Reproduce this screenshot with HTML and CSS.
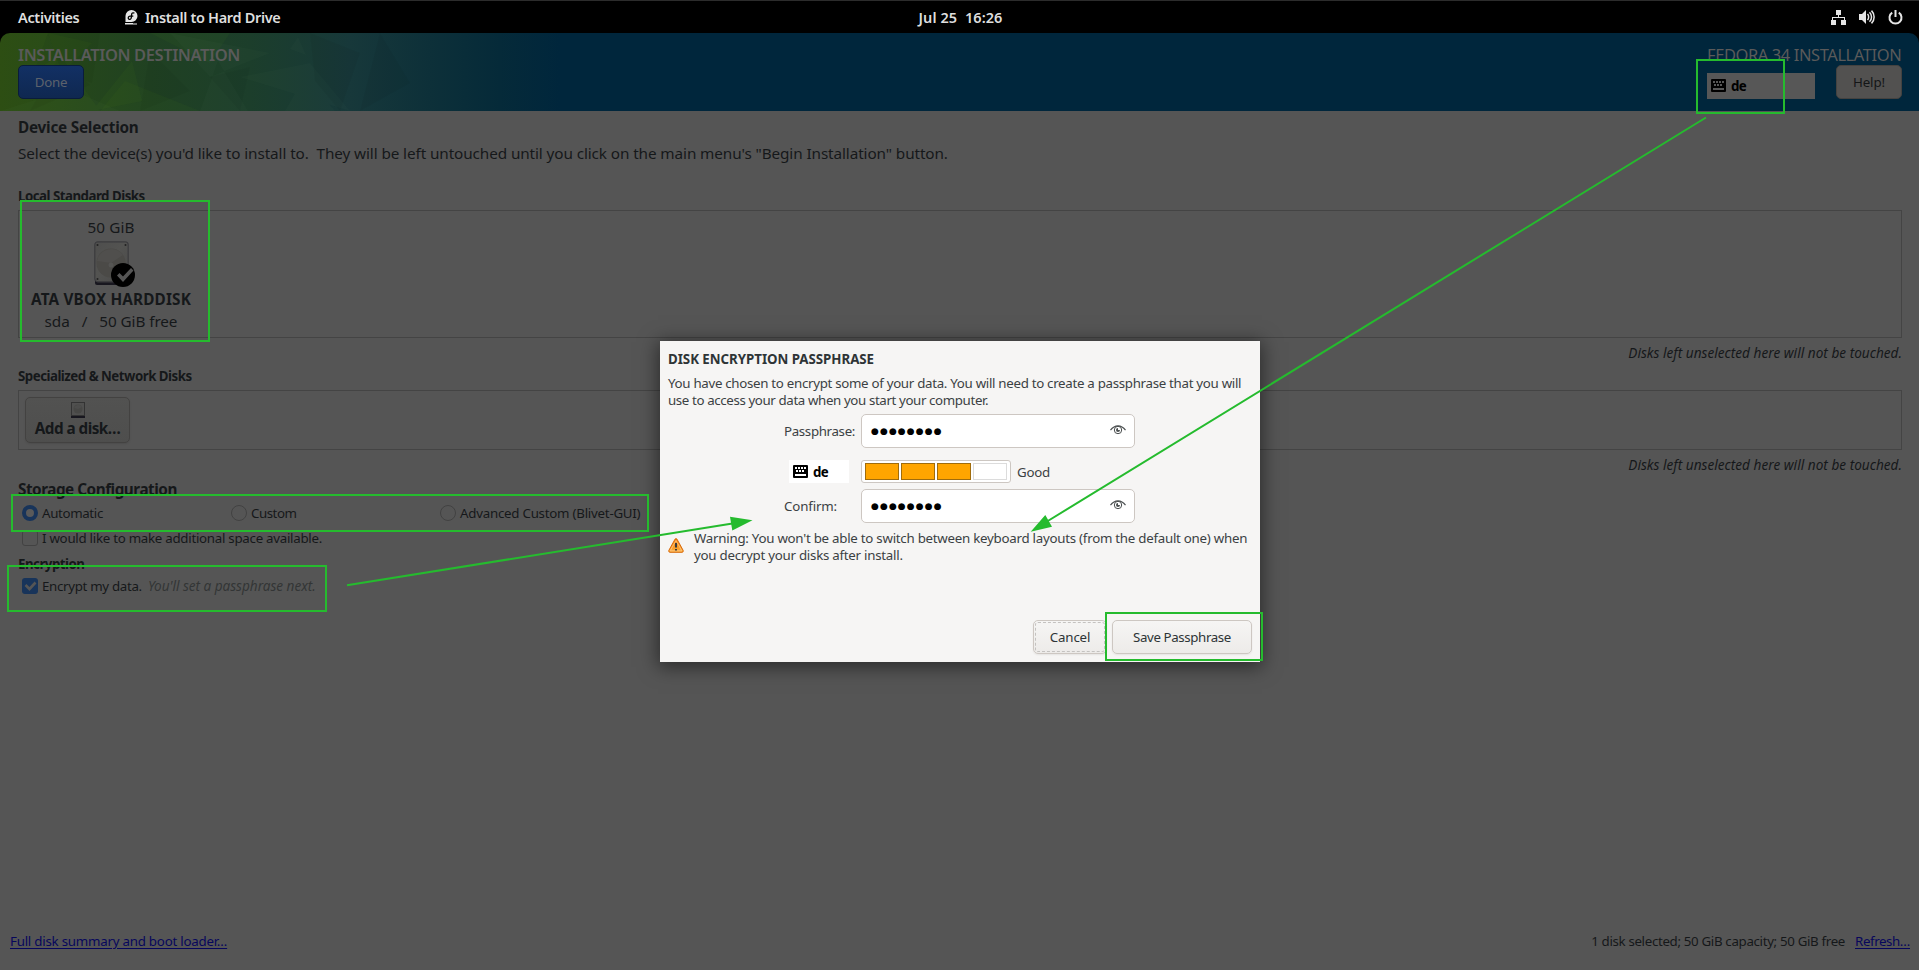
FILE: index.html
```
<!DOCTYPE html>
<html lang="en">
<head>
<meta charset="utf-8">
<title>Install to Hard Drive</title>
<link rel="stylesheet" href="styles.css">
</head>
<body>
<svg class="defs" width="0" height="0">
  <defs>
    <symbol id="keyboard" viewBox="0 0 15 13">
      <path fill-rule="evenodd" d="M1 0H14a1 1 0 0 1 1 1V12a1 1 0 0 1-1 1H1a1 1 0 0 1-1-1V1a1 1 0 0 1 1-1zM2 2v2h2V2zM5 2v2h2V2zM8 2v2h2V2zM11 2v2h2V2zM3 5v2h2V5zM6 5v2h2V5zM9 5v2h2V5zM2 9v2h11V9z"/>
    </symbol>
    <symbol id="eye" viewBox="0 0 16 10">
      <path d="M.5 5.200C3 1.800 5.500.8 8 .8s5 1 7.500 4.400" fill="none" stroke="#4b4f50" stroke-width="1.200"/>
      <circle cx="8" cy="5" r="3.700" fill="none" stroke="#4b4f50" stroke-width="1"/>
      <path d="M8 3a2 2 0 1 0 2 2H8z" fill="#4b4f50"/>
    </symbol>
    <linearGradient id="plate" x1="0" y1="0" x2="1" y2="1">
      <stop offset="0" stop-color="#4e4e4d"/><stop offset=".45" stop-color="#535351"/><stop offset="1" stop-color="#4a4a49"/>
    </linearGradient>
    <linearGradient id="warn" x1="0" y1="0" x2="0" y2="1">
      <stop offset="0" stop-color="#f57900"/><stop offset="1" stop-color="#fcaf3e"/>
    </linearGradient>
  </defs>
</svg>
<div class="desktop">
  <nav class="topbar">
    <div class="topbar-left">
      <span class="activities">Activities</span>
      <svg class="fedora" viewBox="0 0 13 15" width="13" height="15">
        <path d="M6.500 0A6 6 0 0 1 12.500 6A6 6 0 0 1 6.500 12H.500V6A6 6 0 0 1 6.500 0z" fill="#e6e6e6"/>
        <path d="M9.400 3.100C7.600 2.300 6.700 3.300 6.600 4.600L6.300 7.600C6.100 9.400 4.800 9.700 3.800 9.100C2.700 8.200 3.300 6.200 5 6.200H8.300" fill="none" stroke="#000" stroke-width="1.300"/>
        <path d="M0 13h12v1.500H0z" fill="#e6e6e6"/><path d="M8 13h4v1.500H8z" fill="#777"/>
      </svg>
      <span class="app-name">Install to Hard Drive</span>
    </div>
    <span class="clock">Jul 25&nbsp; 16:26</span>
    <div class="tray">
      <svg width="15" height="15" viewBox="0 0 15 15" fill="#e6e6e6"><path d="M5 0h5v5H5zM0 10h5v5H0zM10 10h5v5h-5zM7 5h1v2h6v3h-1V8H2v2H1V7h6z"/></svg>
      <svg width="16" height="14" viewBox="0 0 16 14"><path d="M0 4h3l4-4v14L3 10H0z" fill="#e6e6e6"/><path d="M8.500 4c1.500 1.500 1.500 4.500 0 6M10.500 2.200c2.700 2.500 2.700 7.100 0 9.600M12.500.6c3.500 3.500 3.500 9.300 0 12.800" fill="none" stroke="#e6e6e6" stroke-width="1.500"/></svg>
      <svg width="15" height="15" viewBox="0 0 15 15" fill="none" stroke="#e6e6e6" stroke-width="2"><path d="M4.200 2.600A6 6 0 1 0 10.800 2.600M7.500 0v7"/></svg>
    </div>
  </nav>

  <header class="banner">
    <svg class="facets" width="560" height="78" viewBox="0 0 560 78">
      <g fill="#6fae1c" fill-opacity=".045">
        <path d="M0 0H48L20 78H0zM48 0l14 40 30-30zM92 78l40-50 10 40zM0 60l60-38 40 56H0z"/>
        <path d="M100 78l25-30 75 30zM150 0l60 30 20-30z"/>
      </g>
      <g fill="#9fd0a0" fill-opacity=".025">
        <path d="M170 0l40 44 60-24zM200 78l18-50 30 50zM290 16l8-12 8 18zM285 78l20-35 30 35zM240 44l70-14 40 48zM0 78l70-22 50 22z"/>
      </g>
      <g fill="#000" fill-opacity=".04">
        <path d="M48 0h52l-8 50-30-10zM140 78l10-60 40 40zM210 44l40-10-10 44zM310 0l50 20-20 58-25-30zM380 0l30 50-50 28zM30 78l30-56 30 30z"/>
      </g>
    </svg>
    <div class="banner-col">
      <h1 class="banner-title">INSTALLATION DESTINATION</h1>
      <button class="btn btn-done">Done</button>
    </div>
    <div class="banner-col banner-right">
      <span class="product">FEDORA 34 INSTALLATION</span>
      <div class="banner-tools">
        <div class="layout layout-dim"><svg width="15" height="13"><use href="#keyboard"/></svg><b>de</b></div>
        <button class="btn btn-help">Help!</button>
      </div>
    </div>
  </header>

  <main class="content">
    <h2 class="h-large">Device Selection</h2>
    <p class="intro">Select the device(s) you'd like to install to.&nbsp; They will be left untouched until you click on the main menu's "Begin Installation" button.</p>

    <h3 class="h-small h-local">Local Standard Disks</h3>
    <section class="disk-box">
      <div class="disk">
        <span class="disk-size">50 GiB</span>
        <svg class="disk-icon" width="42" height="46" viewBox="0 0 42 46">
          <rect x="1" y="38" width="34" height="6" rx="2" fill="#18171f"/>
          <rect x=".8" y=".8" width="33.400" height="40" rx="3" fill="url(#plate)" stroke="#3b3b3e" stroke-width="1.200"/>
          <circle cx="17" cy="22" r="14.500" fill="#4b4a47"/>
          <path d="M3 20A14.500 14.500 0 0 1 29 14L17 22z" fill="#504f4d"/>
          <circle cx="17" cy="24" r="2.500" fill="#555553"/>
          <g fill="#222"><circle cx="3.500" cy="4" r="1"/><circle cx="31.500" cy="4" r="1"/><circle cx="3.500" cy="38" r="1"/></g>
          <circle cx="29" cy="34" r="12" fill="#000"/>
          <path d="M23 34.500l2.500-2.500 3.500 3.500 8-8.500 2.500 2.500L29 41z" fill="#555"/>
        </svg>
        <b class="disk-name">ATA VBOX HARDDISK</b>
        <div class="disk-meta"><span>sda</span><span>/</span><span>50 GiB free</span></div>
      </div>
    </section>
    <p class="hint">Disks left unselected here will not be touched.</p>

    <h3 class="h-small h-special">Specialized &amp; Network Disks</h3>
    <section class="network-box">
      <button class="btn btn-add">
        <svg width="14" height="16" viewBox="0 0 14 16"><path d="M0 13h14v3H0z" fill="#18171f"/><rect x=".5" y=".5" width="13" height="13" fill="#50504f" stroke="#333"/><circle cx="7" cy="7" r="4.500" fill="#474745"/><path d="M3 6a4.500 4.500 0 0 1 8-1L7 7z" fill="#4d4d4c"/></svg>
        <span>Add a disk…</span>
      </button>
    </section>
    <p class="hint">Disks left unselected here will not be touched.</p>

    <h2 class="h-large h-storage">Storage Configuration</h2>
    <div class="radios">
      <label class="choice"><i class="radio radio-on"></i><span class="t-auto">Automatic</span></label>
      <label class="choice"><i class="radio"></i><span class="t-custom">Custom</span></label>
      <label class="choice"><i class="radio"></i><span class="t-adv">Advanced Custom (Blivet-GUI)</span></label>
    </div>
    <label class="choice choice-space"><i class="check"></i><span>I would like to make additional space available.</span></label>

    <h3 class="h-small h-enc">Encryption</h3>
    <label class="choice choice-enc">
      <svg class="check-on" width="16" height="16" viewBox="0 0 16 16"><rect width="16" height="16" rx="3" fill="#18345a"/><path d="M3.500 7l4 4 6-6.500" fill="none" stroke="#555" stroke-width="2.600"/></svg>
      <span class="t-enc">Encrypt my data.</span><em>You'll set a passphrase next.</em>
    </label>

    <footer class="footer">
      <a class="link t-summary">Full disk summary and boot loader…</a>
      <div class="status"><span>1 disk selected; 50 GiB capacity; 50 GiB free</span><a class="link t-refresh">Refresh…</a></div>
    </footer>
  </main>
</div>

<div class="dialog">
  <h2 class="dialog-title">DISK ENCRYPTION PASSPHRASE</h2>
  <p class="dialog-text">You have chosen to encrypt some of your data. You will need to create a passphrase that you will<br><span class="t-use">use to access your data when you start your computer.</span></p>
  <div class="form">
    <span class="t-pass">Passphrase:</span>
    <div class="field"><span class="dots">●●●●●●●●</span><svg width="16" height="10"><use href="#eye"/></svg></div>
    <div class="layout layout-lit"><svg width="15" height="13"><use href="#keyboard"/></svg><b>de</b></div>
    <div class="strength"><div class="meter"><i class="on"></i><i class="on"></i><i class="on"></i><i></i></div><span>Good</span></div>
    <span class="t-confirm">Confirm:</span>
    <div class="field"><span class="dots">●●●●●●●●</span><svg width="16" height="10"><use href="#eye"/></svg></div>
  </div>
  <div class="warning">
    <svg width="16" height="15" viewBox="0 0 16 15"><path d="M7 1.200Q8 0 9 1.200L15.200 12.500Q15.600 14.300 14 14.300H2Q.4 14.300.8 12.500z" fill="url(#warn)" stroke="#d8690b"/><path d="M8 2.500L13.800 12.800H2.200z" fill="none" stroke="#fcc98a" stroke-width=".8"/><path d="M7 5h2v4.500H7zM7 11h2v1.500H7z" fill="#3a3a3a"/></svg>
    <p>Warning: You won't be able to switch between keyboard layouts (from the default one) when<br><span class="t-decrypt">you decrypt your disks after install.</span></p>
  </div>
  <div class="actions">
    <button class="btn btn-light btn-cancel">Cancel</button>
    <button class="btn btn-light btn-save">Save Passphrase</button>
  </div>
</div>

<svg class="marks" width="1919" height="970" viewBox="0 0 1919 970">
  <g fill="none" stroke="#25bb2e" stroke-width="2">
    <rect x="21" y="201" width="188" height="140"/>
    <rect x="12" y="495" width="636" height="36"/>
    <rect x="8" y="566" width="318" height="45"/>
    <rect x="1697" y="60" width="87" height="53"/>
    <rect x="1106" y="613" width="156" height="47"/>
    <path d="M347 585.200L734 523.300M1706 117.500L1047 521.500"/>
  </g>
  <path d="M752.500 520.300L730 516.700L732.300 530.500zM1030.700 531.700L1045.300 515L1052 526.700z" fill="#25bb2e"/>
</svg>
</body>
</html>
```
FILE: styles.css
```
* { box-sizing: border-box; }
body { margin: 0; background: #000; font: 13.3px/18px "Noto Sans", "Open Sans", sans-serif; letter-spacing: -.27px; color: #15181a; }
h1, h2, h3, p { margin: 0; font-size: inherit; }
button { font: inherit; letter-spacing: inherit; margin: 0; padding: 0; }
svg { display: block; flex: none; }
.defs { position: absolute; }
.desktop { height: 970px; overflow: hidden; display: flex; flex-direction: column; white-space: nowrap; }

/* Shell bar */
.topbar { flex: none; height: 33px; border-top: 1px solid #2c2c2c; padding: 0 16px 1px 18px; display: grid; grid-template-columns: 1fr auto 1fr; align-items: center; color: #dedede; font-size: 14.5px; font-weight: 600; letter-spacing: -.33px; }
.topbar-left { display: flex; align-items: center; }
.activities { width: 107px; }
.fedora { margin-right: 7px; }
.clock { letter-spacing: .08px; }
.tray { display: flex; justify-content: flex-end; align-items: center; gap: 13px; }
.topbar svg { margin-top: 1px; }

/* Banner */
.banner { flex: none; height: 78px; position: relative; border-radius: 10px 10px 0 0; overflow: hidden; padding: 11px 17px 0 18px; display: flex; justify-content: space-between; background: linear-gradient(90deg, #2a4a13 0, #264819 60px, #204122 150px, #1c3e2b 250px, #17383a 350px, #0d3039 430px, #052a39 500px, #00263c 560px); color: #5a5a5a; }
.facets { position: absolute; left: 0; top: 0; }
.banner-col { position: relative; display: flex; flex-direction: column; }
.banner-title, .product { font-size: 16.5px; line-height: 21px; letter-spacing: -.41px; }
.banner-title { font-weight: 600; }
.product { letter-spacing: -.42px; }
.btn { display: flex; align-items: center; justify-content: center; border-radius: 5px; }
.btn-done, .btn-help { width: 66px; height: 34px; }
.btn-done { border: 1px solid #0a1c3b; background: linear-gradient(#123064, #0f2850); color: #5c626c; letter-spacing: -.3px; }
.btn-help { border: 1px solid #444240; background: #525150; color: #141617; letter-spacing: -.1px; }
.banner-tools { display: flex; justify-content: space-between; width: 195px; }
.layout { display: flex; align-items: center; gap: 5px; padding-left: 4px; color: #000; letter-spacing: -.6px; }
.layout-dim { width: 108px; height: 26px; margin-top: 8px; background: #575757; }
.layout-dim svg, .layout-lit svg { margin-bottom: 1px; }

/* Page body */
.content { flex: 1; background: #555; display: flex; flex-direction: column; padding: 6px 17px 0 18px; }
.h-large { font-size: 15.3px; line-height: 20px; letter-spacing: -.23px; }
.h-small { letter-spacing: -.51px; }
.intro { margin-top: 6px; font-size: 15.3px; line-height: 20px; letter-spacing: -.1px; }
.h-local { margin-top: 24px; }
.disk-box { margin-top: 5px; height: 128px; border: 1px solid #444; padding: 6px 0 0 12px; }
.disk { width: 160px; display: flex; flex-direction: column; align-items: center; font-size: 15.3px; line-height: 20px; }
.disk-size { letter-spacing: .1px; }
.disk-icon { margin: 4px 0 2px 7px; }
.disk-name { letter-spacing: .16px; }
.disk-meta { display: flex; gap: 12px; margin-top: 2px; letter-spacing: -.08px; }
.hint { margin-top: 6px; text-align: right; font-style: italic; font-size: 13.6px; letter-spacing: .02px; }
.h-special { margin-top: 5px; }
.network-box { margin-top: 5px; height: 60px; border: 1px solid #444; padding: 6px; }
.btn-add { width: 105px; height: 46px; flex-direction: column; justify-content: flex-start; padding-top: 4px; border: 1px solid #434241; background: linear-gradient(#525251, #4e4e4d); font-weight: 700; font-size: 15.3px; line-height: 20px; letter-spacing: -.54px; color: #15181a; box-shadow: 0 1px 2px rgba(0,0,0,.1); }
.h-storage { margin-top: 5px; letter-spacing: -.48px; }
.radios { margin: 5px 0 0 4px; display: grid; grid-template-columns: 209px 209px auto; }
.choice { display: flex; align-items: center; gap: 4px; }
.radio { width: 16px; height: 16px; border: 1px solid #424242; border-radius: 50%; }
.radio-on { border: 4px solid #18345a; background: #5a5a5a; }
.check { width: 16px; height: 16px; border: 1px solid #424242; border-radius: 3px; }
.choice-space { margin: 7px 0 0 4px; }
.h-enc { margin-top: 8px; }
.choice-enc { margin: 4px 0 0 4px; }
.check-on { margin-bottom: 1px; }
.choice em { margin-left: 2px; color: #333536; font-size: 13.6px; letter-spacing: -.03px; }
.t-auto { letter-spacing: -.35px; }
.t-custom { letter-spacing: -.46px; }
.t-adv { letter-spacing: -.24px; }
.t-enc { letter-spacing: -.31px; }
.footer { margin: auto -8px 20px; display: flex; justify-content: space-between; }
.status { display: flex; gap: 10px; letter-spacing: -.33px; }
.link { color: #07075c; text-decoration: underline; text-underline-offset: 2px; }
.t-summary { letter-spacing: -.23px; }
.t-refresh { letter-spacing: -.4px; }

/* Passphrase dialog */
.dialog { position: absolute; left: 660px; top: 341px; width: 600px; height: 321px; padding: 9px 8px 8px; display: flex; flex-direction: column; background: #f6f5f4; color: #3b4143; box-shadow: 0 3px 18px 2px rgba(0,0,0,.5); white-space: nowrap; }
.dialog-title { letter-spacing: -.03px; color: #2e3436; }
.dialog-text, .warning { line-height: 17px; }
.dialog-text { margin-top: 7px; letter-spacing: -.3px; }
.t-use { letter-spacing: -.38px; }
.form { margin: 5px 0 0 116px; display: grid; grid-template-columns: 77px 274px; grid-template-rows: 34px 41px 34px; align-items: center; }
.t-pass { letter-spacing: -.34px; }
.t-confirm { letter-spacing: -.14px; }
.field { height: 34px; border: 1px solid #cdc7c2; border-radius: 5px; background: #fff; display: flex; align-items: center; justify-content: space-between; padding: 0 8px 0 9px; }
.field svg { margin-bottom: 2px; }
.dots { font: 9px/18px "DejaVu Sans", sans-serif; letter-spacing: 1.1px; color: #000; }
.layout-lit { width: 60px; height: 23px; margin: 6px 0 0 5px; background: #fff; }
.strength { display: flex; align-items: center; gap: 6px; margin-top: 6px; }
.meter { width: 150px; height: 23px; border: 1px solid #cdc7c2; border-radius: 3px; background: #fff; display: grid; grid-template-columns: repeat(4, 34px); gap: 2px; padding: 2px 3px; }
.meter i { border: 1px solid #dcdcdc; height: 17px; }
.meter .on { border-color: #a06c0c; background: #ffa500; }
.warning { margin-top: 7px; display: flex; gap: 10px; }
.warning svg { margin-top: 8px; }
.warning p { letter-spacing: -.255px; }
.actions { margin-top: auto; display: flex; justify-content: flex-end; gap: 5px; }
.btn-light { height: 34px; border: 1px solid #cdc7c2; background: linear-gradient(#f6f5f4, #edebe9); color: #2e3436; box-shadow: 0 1px 2px rgba(0,0,0,.07); }
.btn-cancel { width: 74px; letter-spacing: -.15px; outline: 1px dashed #c4c2c0; outline-offset: -3px; }
.btn-save { width: 140px; letter-spacing: -.38px; }

/* Callouts drawn over the screen */
.marks { position: absolute; left: 0; top: 0; pointer-events: none; }
```
